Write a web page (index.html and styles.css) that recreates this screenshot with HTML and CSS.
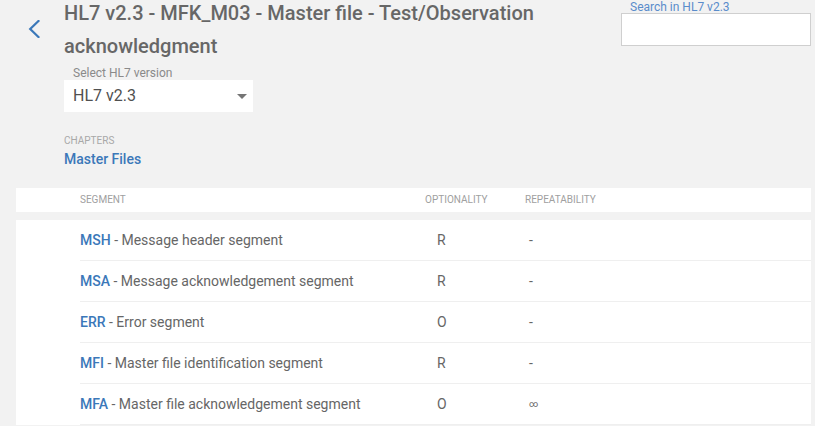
FILE: index.html
```html
<!DOCTYPE html>
<html>
<head>
<meta charset="utf-8">
<link rel="stylesheet" href="styles.css">
</head>
<body>
<div class="page">
  <div class="top">
    <a class="back" href="#" aria-label="Back">
      <svg width="12" height="18" viewBox="0 0 12 18"><polyline points="10.5,1 2.2,9 10.5,17" fill="none" stroke="#3b78b9" stroke-width="2.2" stroke-linecap="square"/></svg>
    </a>
    <div class="main">
      <h1 class="title">HL7 v2.3 - MFK_M03 - Master file - Test/Observation acknowledgment</h1>
      <div class="select-label">Select HL7 version</div>
      <div class="select">
        <span>HL7 v2.3</span>
        <span class="caret"></span>
      </div>
      <div class="chapters-label">CHAPTERS</div>
      <div class="chapter">Master Files</div>
    </div>
    <div class="search">
      <label class="search-label">Search in HL7 v2.3</label>
      <div class="search-box"></div>
    </div>
  </div>

  <div class="band head">
    <div class="grid">
      <div>SEGMENT</div>
      <div>OPTIONALITY</div>
      <div>REPEATABILITY</div>
    </div>
  </div>

  <div class="band body">
    <div class="grid row"><div><b>MSH</b> - Message header segment</div><div class="opt">R</div><div class="rep">-</div></div>
    <div class="grid row"><div><b>MSA</b> - Message acknowledgement segment</div><div class="opt">R</div><div class="rep">-</div></div>
    <div class="grid row"><div><b>ERR</b> - Error segment</div><div class="opt">O</div><div class="rep">-</div></div>
    <div class="grid row"><div><b>MFI</b> - Master file identification segment</div><div class="opt">R</div><div class="rep">-</div></div>
    <div class="grid row"><div><b>MFA</b> - Master file acknowledgement segment</div><div class="opt">O</div><div class="rep"><span class="inf">∞</span></div></div>
  </div>
</div>
</body>
</html>
```

FILE: styles.css
```css
html, body {
  margin: 0;
  padding: 0;
  background: #f2f2f2;
  font-family: Roboto, "Liberation Sans", sans-serif;
  color: #666;
  overflow: hidden;
}

.page {
  padding: 0 4px 0 16px;
}

.top {
  display: flex;
}

.back {
  display: block;
  width: 36px;
  padding: 20px 0 0 12px;
  flex: none;
}

.back svg {
  display: block;
}

.main {
  flex: 1;
  min-width: 0;
}

.title {
  margin: -3px 0 0 0;
  font-size: 20px;
  line-height: 33px;
  font-weight: 500;
  color: #676767;
  max-width: 540px;
}

.select-label {
  margin: 4px 0 0 9px;
  font-size: 12px;
  line-height: 13px;
  color: #8a8a8a;
}

.select {
  display: flex;
  align-items: center;
  justify-content: space-between;
  width: 189px;
  height: 32px;
  box-sizing: border-box;
  padding: 0 6px 0 9px;
  background: #fff;
  font-size: 16px;
  line-height: 32px;
  color: #505050;
}

.caret {
  width: 0;
  height: 0;
  border-left: 5px solid transparent;
  border-right: 5px solid transparent;
  border-top: 5px solid #757575;
}

.chapters-label {
  margin-top: 23px;
  font-size: 10px;
  line-height: 12px;
  color: #a8a8a8;
}

.chapter {
  margin-top: 2px;
  font-size: 14px;
  line-height: 20px;
  font-weight: 500;
  color: #3b78b9;
}

.search {
  width: 190px;
  flex: none;
}

.search-label {
  display: block;
  margin: 2px 0 0 9px;
  font-size: 12px;
  line-height: 11px;
  color: #5a8ccb;
}

.search-box {
  height: 33px;
  box-sizing: border-box;
  border: 1px solid #cfcfcf;
  background: #fff;
}

.band {
  background: #fff;
  padding-left: 64px;
}

.head {
  margin-top: 19px;
  height: 24px;
}

.grid {
  display: grid;
  grid-template-columns: 345px 100px 1fr;
}

.head .grid {
  font-size: 10px;
  line-height: 24px;
  color: #a0a0a0;
}

.body {
  margin-top: 8px;
}

.row {
  height: 40px;
  line-height: 40px;
  font-size: 14px;
  color: #666;
  border-bottom: 1px solid #efefef;
}

.row b {
  font-weight: 500;
  color: #3b78b9;
}

.opt {
  padding-left: 12px;
}

.rep {
  padding-left: 4px;
}

.inf {
  font-size: 9px;
  vertical-align: 2px;
}
```
